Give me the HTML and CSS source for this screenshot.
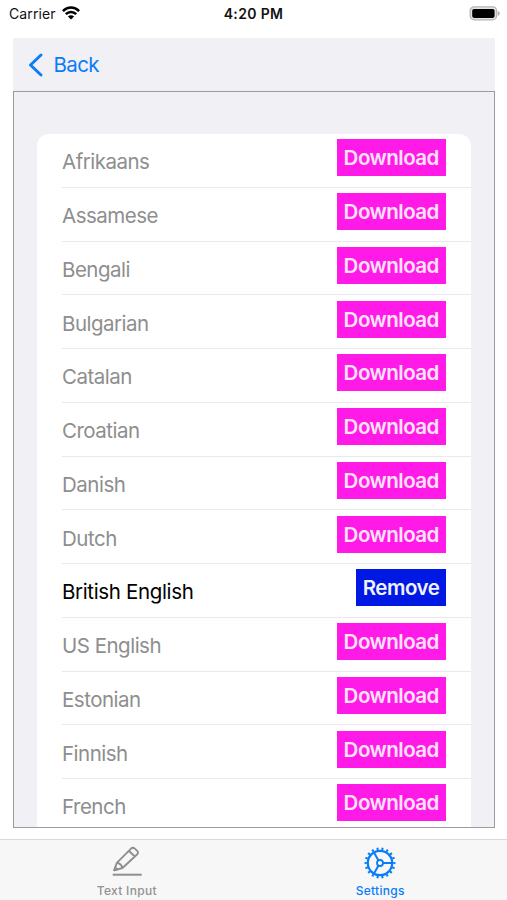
FILE: index.html
```html
<!DOCTYPE html>
<html lang="en">
<head>
<meta charset="utf-8">
<title>Settings</title>
<link rel="stylesheet" href="styles.css">
</head>
<body>
<header class="status">
  <div class="carrier"><span>Carrier</span>
    <svg width="18" height="14" viewBox="0 0 18 14" fill="none" stroke="#000" stroke-width="2.5"><path d="M.9 5.100C5.500.3 12.500.3 17.100 5.100M3.800 8.200C6.800 5.200 11.200 5.200 14.200 8.200"/><path d="M5.900 10.500C7.800 8.700 10.200 8.700 12.100 10.500L9 13.500Z" fill="#000" stroke="none"/></svg>
  </div>
  <span class="time">4:20 PM</span>
  <svg class="battery" width="31" height="15" viewBox="0 0 31 15"><rect x="1.200" y=".9" width="26.400" height="12.900" rx="4" fill="#e4e4e4" stroke="#b4b4b4" stroke-width="1.300"/><rect x="3.200" y="2.900" width="22.400" height="9" rx="1.800" fill="#000"/><path d="M28.800 5c2.500 1 2.500 4 0 5Z" fill="#aaa"/></svg>
</header>
<main class="screen">
  <nav class="nav"><svg width="16" height="24" viewBox="0 0 16 24" fill="none" stroke="#0a7cf8" stroke-width="2.900" stroke-linecap="round" stroke-linejoin="round"><path d="M13 2 2.500 12 13 22"/></svg><span>Back</span></nav>
  <section class="panel">
    <ul class="list">
      <li><span>Afrikaans</span><button>Download</button></li>
      <li><span>Assamese</span><button>Download</button></li>
      <li><span>Bengali</span><button>Download</button></li>
      <li><span>Bulgarian</span><button>Download</button></li>
      <li><span>Catalan</span><button>Download</button></li>
      <li><span>Croatian</span><button>Download</button></li>
      <li><span>Danish</span><button>Download</button></li>
      <li><span>Dutch</span><button>Download</button></li>
      <li class="installed"><span>British English</span><button>Remove</button></li>
      <li><span>US English</span><button>Download</button></li>
      <li><span>Estonian</span><button>Download</button></li>
      <li><span>Finnish</span><button>Download</button></li>
      <li><span>French</span><button>Download</button></li>
    </ul>
  </section>
</main>
<footer class="tabs">
  <div class="tab">
    <svg width="34" height="34" viewBox="0 0 34 34" fill="none" stroke="#8f8f8f" stroke-width="1.900" stroke-linejoin="round"><path d="M4.300 24.300 6.800 16.800 20.800 2.800Q22.800.8 24.800 2.600L27 4.600Q28.900 6.500 27 8.500L12.500 22ZM18.800 4.800l6 5.700M6.800 16.800q4.500.9 5.700 5.200"/><path d="M4.300 24.300l.9-2.900 2.200 2Z" fill="#8f8f8f"/><path d="M2.700 28.700h29" stroke-width="2"/></svg>
    <span>Text Input</span>
  </div>
  <div class="tab active">
    <svg width="34" height="34" viewBox="0 0 34 34" fill="none" stroke="#0a7cf8"><circle cx="17" cy="17" r="12.200" stroke-width="2.200"/><circle cx="17" cy="17" r="14.200" stroke-width="2.600" pathLength="180" stroke-dasharray="4 6" stroke-dashoffset="2"/><circle cx="17" cy="17" r="3" stroke-width="1.800"/><path d="M20 17h9M15.500 14.400 11 6.600M15.500 19.600 11 27.400" stroke-width="2"/></svg>
    <span>Settings</span>
  </div>
</footer>
</body>
</html>
```
FILE: styles.css
```css
* { box-sizing: border-box; }
body {
  margin: 0;
  height: 900px;
  overflow: hidden;
  display: flex;
  flex-direction: column;
  background: #fff;
  font-family: Inter, "Liberation Sans", sans-serif;
}
.status {
  height: 38px;
  padding: 0 7px 0 9px;
  display: grid;
  grid-template-columns: 1fr auto 1fr;
  align-items: start;
  font-size: 14px;
  line-height: 28px;
  color: #111;
}
.carrier { display: flex; gap: 6px; letter-spacing: 0.1px; }
.carrier svg { margin-top: 6px; }
.time { margin-right: 2px; font-weight: 600; letter-spacing: 0.35px; }
.battery { justify-self: end; margin-top: 6px; }
.screen {
  height: 790px;
  margin: 0 12px 0 13px;
  display: flex;
  flex-direction: column;
}
.nav {
  height: 53px;
  padding-left: 15px;
  display: flex;
  align-items: center;
  gap: 9.5px;
  background: #f1f0f5;
  color: #0a7cf8;
  font-size: 20.5px;
  letter-spacing: -0.6px;
}
.panel {
  flex: 1;
  min-height: 0;
  overflow: hidden;
  padding: 42px 23px 0;
  border: 1px solid #9c9ca0;
  background: #f1f0f5;
}
.list {
  margin: 0;
  padding: 0;
  list-style: none;
  background: #fff;
  border-radius: 12px 12px 0 0;
}
.list li {
  height: 53.75px;
  margin-left: 25px;
  padding: 5.3px 25px 0 0;
  display: flex;
  align-items: flex-start;
  justify-content: space-between;
  border-bottom: 1px solid #e9e9eb;
  color: #8e8e8e;
  font-size: 20.5px;
  letter-spacing: -0.5px;
}
.list li:last-child { border-bottom: 0; }
.list li span { line-height: 45px; }
.list button {
  width: 109.5px;
  height: 37px;
  padding: 1px 0 0;
  border: 0;
  background: #ff1ae8;
  color: #ffe3fc;
  font: 600 20.5px/36px Inter, "Liberation Sans", sans-serif;
  letter-spacing: -0.5px;
}
.list .installed { color: #000; letter-spacing: -0.35px; }
.list .installed button { width: 90px; background: #0018e3; color: #f0f2ff; }
.tabs {
  margin-top: 11px;
  height: 61px;
  display: grid;
  grid-template-columns: 1fr 1fr;
  border-top: 1px solid #dadada;
  background: #f7f7f7;
}
.tab {
  display: flex;
  flex-direction: column;
  align-items: center;
  padding-top: 6px;
  color: #929292;
  font-size: 12px;
  font-weight: 500;
  line-height: 22px;
  letter-spacing: 0.3px;
}
.active { color: #0a7cf8; }
```
